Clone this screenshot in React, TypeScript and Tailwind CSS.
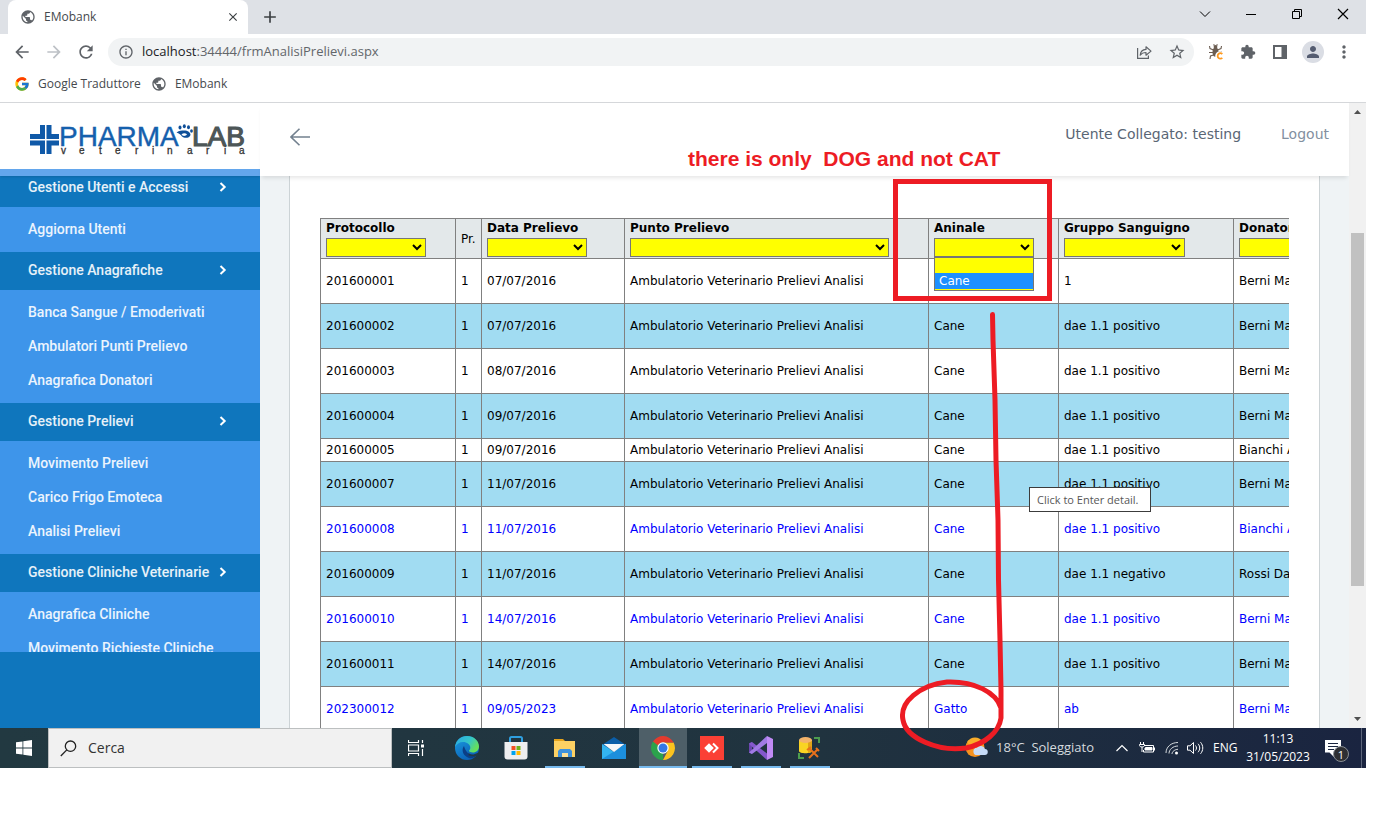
import type { ReactNode } from "react";
import {
  MdArrowBack,
  MdArrowForward,
  MdClose,
  MdAdd,
  MdExtension,
  MdInfoOutline,
  MdMoreVert,
  MdPerson,
  MdPublic,
  MdRefresh,
  MdStarBorder,
} from "react-icons/md";
import { FcGoogle } from "react-icons/fc";

const UI = "font-['Open_Sans','Noto_Sans',sans-serif]";

/* ---------- browser chrome ---------- */

function TabStrip() {
  return (
    <div className="flex h-[34px] shrink-0 items-stretch bg-[#dee1e6] pl-2">
      <div className="flex w-60 items-center rounded-t-lg bg-white pr-2 pl-3">
        <MdPublic className="size-4 text-[#5f6368]" />
        <span className="ml-2 flex-1 text-xs text-[#45494d]">EMobank</span>
        <button aria-label="Chiudi scheda" className="text-[#3c4043]">
          <MdClose className="size-3.5" />
        </button>
      </div>
      <button aria-label="Nuova scheda" className="ml-3 text-[#3c4043]">
        <MdAdd className="size-5" />
      </button>
      <div className="ml-auto flex items-center pb-1.5 text-black">
        <button aria-label="Cerca schede" className="flex w-[46px] justify-center">
          <svg width="12" height="12" viewBox="0 0 12 12" fill="none" stroke="currentColor"><path d="M1 3.5 6 8.5 11 3.5" /></svg>
        </button>
        <button aria-label="Riduci a icona" className="flex w-[46px] justify-center">
          <svg width="12" height="12" viewBox="0 0 12 12" stroke="currentColor"><path d="M1 6.5H11" /></svg>
        </button>
        <button aria-label="Ripristina" className="flex w-[46px] justify-center">
          <svg width="12" height="12" viewBox="0 0 12 12" fill="none" stroke="currentColor"><path d="M1.5 3.5h7v7h-7zM3.5 3.5v-2h7v7h-2" /></svg>
        </button>
        <button aria-label="Chiudi" className="flex w-[46px] justify-center">
          <svg width="12" height="12" viewBox="0 0 12 12" stroke="currentColor" strokeWidth="1.2"><path d="M1 1 11 11M11 1 1 11" /></svg>
        </button>
      </div>
    </div>
  );
}

function Toolbar() {
  return (
    <div className="flex h-9 shrink-0 items-center pr-3 pl-3 text-[#5f6368]">
      <button aria-label="Indietro"><MdArrowBack className="size-5" /></button>
      <button aria-label="Avanti" className="ml-3 text-[#bdc1c6]"><MdArrowForward className="size-5" /></button>
      <button aria-label="Ricarica" className="ml-3"><MdRefresh className="size-5" /></button>
      <div className="ml-3 flex h-7 flex-1 items-center rounded-full bg-[#f1f3f4] pr-2 pl-2.5">
        <MdInfoOutline className="size-4" />
        <span className="ml-2 flex-1 text-[13px] text-[#62666a]">
          <span className="text-[#202124]">localhost</span>:34444/frmAnalisiPrelievi.aspx
        </span>
        <button aria-label="Condividi">
          <svg width="16" height="16" viewBox="0 0 16 16" fill="none" stroke="currentColor" strokeWidth="1.2">
            <path d="M1.6 4v10.4h10.8v-3" />
            <path d="M4.2 11.2C4.5 7.6 6.6 5.7 10 5.4V2.8L15 7.1l-5 4.1V8.5C7.3 8.5 5.6 9.3 4.2 11.2Z" strokeLinejoin="round" />
          </svg>
        </button>
        <button aria-label="Preferiti" className="ml-4"><MdStarBorder className="size-[18px]" /></button>
      </div>
      <button aria-label="Estensione" className="ml-3.5">
        <svg width="16" height="16" viewBox="0 0 16 16" fill="none">
          <ellipse cx="7.5" cy="8.2" rx="3" ry="4.6" fill="#6b5d52" />
          <circle cx="7.5" cy="3" r="1.9" fill="#6b5d52" />
          <path d="M5.5 6 2 4.500 1.500 2M5 8.500H1M5.500 11 2.500 12 2 15M9.500 6 13 4.500 13.500 2M10 8H14M6.500 1.500 5.500.5M8.500 1.500 9.500.5" stroke="#6b5d52" strokeWidth="1.1" />
          <path d="M14.3 10a3 3 0 1 0 0 3.8" stroke="#fff" strokeWidth="3.5" />
          <path d="M14.3 10a2.7 2.7 0 1 0 0 3.8" stroke="#ff9a1f" strokeWidth="1.8" />
        </svg>
      </button>
      <button aria-label="Estensioni" className="ml-4"><MdExtension className="size-4" /></button>
      <button aria-label="Pannello laterale" className="ml-4">
        <svg width="16" height="16" viewBox="0 0 16 16"><path fill="currentColor" fillRule="evenodd" d="M1 1h14v14H1zM3 3v10h6.500V3z" /></svg>
      </button>
      <button aria-label="Profilo" className="ml-3.5 flex size-[22px] items-center justify-center rounded-full bg-[#dadde4] text-[#545c70]">
        <MdPerson className="size-[18px]" />
      </button>
      <button aria-label="Menu" className="ml-2.5"><MdMoreVert className="size-5" /></button>
    </div>
  );
}

function Bookmarks() {
  return (
    <div className="flex h-[33px] shrink-0 items-center border-b border-[#d5d7da] pb-1 pl-3.5 text-xs text-[#45494d]">
      <a href="#" className="flex items-center gap-2"><FcGoogle className="size-4" />Google Traduttore</a>
      <a href="#" className="ml-2.5 flex items-center gap-2"><MdPublic className="size-4 text-[#5f6368]" />EMobank</a>
    </div>
  );
}

/* ---------- web page ---------- */

function Logo() {
  return (
    <svg width="220" height="36" viewBox="0 0 220 36" role="img" aria-label="Pharmalab veterinaria" fontFamily="Liberation Sans, Arial, sans-serif">
      <g fill="#0f59a8">
        <path d="M10 2h5v14H0v-5h10zM16.500 2h5v9H29v5H16.500zM0 17.500h15V31h-5v-8.500H0zM16.500 17.500H29v5h-7.500V31h-5z" />
      </g>
      <text x="29" y="23" fontSize="28" fill="#1560ad" stroke="#1560ad" strokeWidth=".4">PHARMA</text>
      <text x="162" y="23" fontSize="28" fill="#4d5657" stroke="#4d5657" strokeWidth="1.2">LAB</text>
      <g fill="#0f4f98">
        <path d="M146.500 9.500c3-2 5-2 7.500-2 4 0 6.500 2 6.500 4.500-1 3.500-6.500 3.500-8.500 1.500-1-2-3-3-5.500-4z" />
        <ellipse cx="150" cy="4.500" rx="1.500" ry="2" />
        <ellipse cx="154.300" cy="3.300" rx="1.500" ry="2" />
        <ellipse cx="158.500" cy="4.300" rx="1.500" ry="2" />
        <ellipse cx="161.500" cy="8" rx="1.400" ry="1.700" />
      </g>
      <path d="M151.500 11.500c1.500-1.500 4-1.500 5.500-.2-1 2-4.500 2.200-5.500.2z" fill="#fff" />
      <text x="31 49 69 85 105 122 137 157 176 194 209" y="31" fontSize="10" fill="#333" stroke="#333" strokeWidth=".3">veterinaria</text>
    </svg>
  );
}

const menu = [
  { title: "Gestione Utenti e Accessi", items: ["Aggiorna Utenti"] },
  { title: "Gestione Anagrafiche", items: ["Banca Sangue / Emoderivati", "Ambulatori Punti Prelievo", "Anagrafica Donatori"] },
  { title: "Gestione Prelievi", items: ["Movimento Prelievi", "Carico Frigo Emoteca", "Analisi Prelievi"] },
  { title: "Gestione Cliniche Veterinarie", items: ["Anagrafica Cliniche", "Movimento Richieste Cliniche"] },
];

function Sidebar() {
  return (
    <aside className="flex w-[260px] shrink-0 flex-col bg-[#0f76bd] font-[Roboto,sans-serif] text-sm font-medium text-white/90">
      <div className="flex h-[66px] shrink-0 items-center bg-white pt-2.5 pl-[30px]"><Logo /></div>
      <nav className="relative min-h-0 flex-1 overflow-hidden before:absolute before:inset-x-0 before:top-0 before:h-[7px] before:bg-[#63a6ec] before:shadow">
        {menu.map((group) => (
          <section key={group.title}>
            <button className="flex h-[38px] w-full items-center bg-[#0f76bd] pb-0.5 pl-7 text-left">
              <span className="w-[191px]">{group.title}</span>
              <svg width="8" height="10" viewBox="0 0 8 10" fill="none" stroke="#fff" strokeWidth="2"><path d="M1.500 1 5.700 5 1.500 9" /></svg>
            </button>
            <ul className="bg-[#3e95ea] pt-[5px] pb-1.5">
              {group.items.map((item) => (
                <li key={item}><a href="#" className="flex h-[34px] items-center pl-7">{item}</a></li>
              ))}
            </ul>
          </section>
        ))}
      </nav>
      <div className="h-[76px] shrink-0" />
    </aside>
  );
}

const columns = [
  { label: "Protocollo", select: "w-[100px]" },
  { label: "Pr.", select: "" },
  { label: "Data Prelievo", select: "w-[100px]" },
  { label: "Punto Prelievo", select: "w-[259px]" },
  { label: "Aninale", select: "w-[100px]" },
  { label: "Gruppo Sanguigno", select: "w-[121px]" },
  { label: "Donatore", select: "w-[160px]" },
];

const punto = "Ambulatorio Veterinario Prelievi Analisi";
const rows = [
  ["201600001", "07/07/2016", "Cane", "1", "Berni Marco"],
  ["201600002", "07/07/2016", "Cane", "dae 1.1 positivo", "Berni Marco"],
  ["201600003", "08/07/2016", "Cane", "dae 1.1 positivo", "Berni Marco"],
  ["201600004", "09/07/2016", "Cane", "dae 1.1 positivo", "Berni Marco"],
  ["201600005", "09/07/2016", "Cane", "dae 1.1 positivo", "Bianchi Anna"],
  ["201600007", "11/07/2016", "Cane", "dae 1.1 positivo", "Berni Marco"],
  ["201600008", "11/07/2016", "Cane", "dae 1.1 positivo", "Bianchi Anna"],
  ["201600009", "11/07/2016", "Cane", "dae 1.1 negativo", "Rossi Dario"],
  ["201600010", "14/07/2016", "Cane", "dae 1.1 positivo", "Berni Marco"],
  ["201600011", "14/07/2016", "Cane", "dae 1.1 positivo", "Berni Marco"],
  ["202300012", "09/05/2023", "Gatto", "ab", "Berni Marco"],
];
const compact = new Set(["201600005"]);
const linked = new Set(["201600008", "201600010", "202300012"]);

function SampleTable() {
  return (
    <table className="w-[1114px] table-fixed border-collapse text-xs text-black">
      <colgroup>
        <col className="w-[135px]" />
        <col className="w-[26px]" />
        <col className="w-[143px]" />
        <col className="w-[304px]" />
        <col className="w-[130px]" />
        <col className="w-[175px]" />
        <col />
      </colgroup>
      <thead>
        <tr className="h-10 bg-[#e3e8ea]">
          {columns.map((c) => (
            <th key={c.label} className={`border border-[#808080] pr-0 pl-[5px] text-left ${c.select ? "align-top font-bold" : "align-middle font-normal"}`}>
              {c.select ? (
                <div className="relative">
                  <label htmlFor={c.label} className="block h-[19px] leading-[18px]">{c.label}</label>
                  <select id={c.label} className={`block h-[19px] border border-[#767676] bg-[#ffff00] font-normal ${c.select}`}>
                    <option></option>
                    <option>Cane</option>
                  </select>
                  {c.label === "Aninale" && (
                    <ul className="absolute top-[38px] left-0 w-[100px] border border-[#767676] bg-[#ffff00] pt-[15px] pb-px font-normal">
                      <li className="bg-[#1e90ff] pl-1 leading-4 text-white">Cane</li>
                    </ul>
                  )}
                </div>
              ) : (
                c.label
              )}
            </th>
          ))}
        </tr>
      </thead>
      <tbody>
        {rows.map(([id, date, animal, group, donor], i) => (
          <tr
            key={id}
            className={`${compact.has(id) ? "h-[23px]" : "h-[45px]"} ${i % 2 ? "bg-[#a1dcf2]" : "bg-white"} ${linked.has(id) ? "text-[#0000ff]" : ""}`}
          >
            {[id, "1", date, punto, animal, group, donor].map((v, k) => (
              <td key={k} className="overflow-hidden border border-[#808080] pl-[5px] whitespace-nowrap">{v}</td>
            ))}
          </tr>
        ))}
      </tbody>
    </table>
  );
}

function WebPage() {
  return (
    <div className="flex min-h-0 flex-1 overflow-hidden">
      <Sidebar />
      <div className="flex min-w-0 flex-1 flex-col bg-[#eff3f5] font-['DejaVu_Sans',Verdana,sans-serif]">
        <header className="z-10 flex h-[73px] shrink-0 items-center bg-white pr-5 pb-1.5 pl-[30px] text-sm shadow-[0_4px_4px_-2px_rgba(0,0,0,0.1)]">
          <button aria-label="Apri o chiudi menu" className="text-[#73818f]">
            <svg width="20" height="18" viewBox="0 0 20 18" fill="none" stroke="currentColor" strokeWidth="1.6"><path d="M20 9H1M9.500 .7 1 9l8.500 8.300" /></svg>
          </button>
          <span className="ml-auto pb-1.5 text-[#5a6675]">Utente Collegato: testing</span>
          <a href="#" className="ml-10 pb-1.5 text-[#8390a0]">Logout</a>
        </header>
        <main className="mr-[29px] ml-[29px] min-h-0 flex-1 overflow-hidden border-x border-[#ccd3d6] bg-white px-[30px] pt-[42px]">
          <div className="overflow-hidden"><SampleTable /></div>
        </main>
      </div>
      <div className="flex w-[17px] shrink-0 flex-col items-center bg-[#f1f1f1] py-[7px]">
        <svg width="7" height="4" viewBox="0 0 7 4"><path d="M3.500 0 7 4H0z" fill="#505050" /></svg>
        <div className="mt-[119px] h-[353px] w-[13px] bg-[#c1c1c1]" />
        <svg className="mt-auto" width="7" height="4" viewBox="0 0 7 4"><path d="M0 0h7L3.500 4z" fill="#505050" /></svg>
      </div>
    </div>
  );
}

/* ---------- taskbar ---------- */

function EdgeIcon() {
  return (
    <svg width="24" height="24" viewBox="0 0 24 24">
      <defs>
        <linearGradient id="edgeTop" x1="0" y1="0" x2="1" y2=".5">
          <stop offset="0" stopColor="#2aa7e8" /><stop offset=".6" stopColor="#35c6c8" /><stop offset="1" stopColor="#66e05a" />
        </linearGradient>
        <linearGradient id="edgeBody" x1="0" y1="0" x2=".6" y2="1">
          <stop offset="0" stopColor="#1b9de2" /><stop offset="1" stopColor="#0a5fb4" />
        </linearGradient>
      </defs>
      <circle cx="12" cy="12" r="12" fill="url(#edgeBody)" />
      <path d="M0 11C.8 4.500 5.500 0 12 0c7 0 12 5 12 10.500 0 3.800-2.800 6-6 6-2.500 0-4-.8-4-1.700 0-.7 1.300-1.200 1.300-3C15.300 8.500 12 6 8 6 4.500 6 1.500 8 0 11z" fill="url(#edgeTop)" />
      <path d="M9 10c-3 4-1 10 5 12 3 .7 6-.4 8.500-4C16 21 10.500 16.500 9 10z" fill="#0b3f86" />
      <path d="M14 14.800c-1.500 4 4 5 8.800 2l1-.2-1.300 3.200-3 .8-6-1.200z" fill="#203843" />
    </svg>
  );
}

function StoreIcon() {
  return (
    <svg width="24" height="24" viewBox="0 0 24 24">
      <path d="M6 7V2.500C6 1.500 6.500 1 7.500 1h9c1 0 1.500.5 1.500 1.500V7" fill="none" stroke="#2f9fe0" strokeWidth="2" />
      <path d="M.5 6h23v14.500c0 2-1 3-3 3h-17c-2 0-3-1-3-3z" fill="#eeeeef" />
      <path d="M7.500 10h4v4h-4z" fill="#f25022" /><path d="M12.500 10h4v4h-4z" fill="#6fb31b" />
      <path d="M7.500 15h4v4h-4z" fill="#00a4ef" /><path d="M12.500 15h4v4h-4z" fill="#ffb900" />
    </svg>
  );
}

function FolderIcon() {
  return (
    <svg width="24" height="24" viewBox="0 0 24 24">
      <path d="M1 3h9l2 2v3H1z" fill="#e6a31c" /><path d="M1 5h21v16H1z" fill="#fdd163" />
      <path d="M5 21v-6l2-2h10l2 2v6h-4v-4H9v4z" fill="#3f92dc" /><path d="M9 17h6v4H9z" fill="#fff" opacity=".35" />
    </svg>
  );
}

function MailIcon() {
  return (
    <svg width="24" height="24" viewBox="0 0 24 24">
      <path d="M0 9 12 1l12 8v4H0z" fill="#0b5ea8" />
      <path d="M0 8l12 8 12-8v15H0z" fill="#33b4f0" /><path d="M0 23 24 8v15z" fill="#1c8fdd" /><path d="M1.500 8h21L12 16z" fill="#f5f7f9" />
    </svg>
  );
}

function ChromeIcon() {
  return (
    <svg width="24" height="24" viewBox="0 0 24 24">
      <path d="M12 12v12A12 12 0 0 1 1.610 6z" fill="#2ba24c" />
      <path d="M22.600 6.400H12v5.600l4.850 2.800L12 24a12 12 0 0 0 10.600-17.600z" fill="#fcc31e" />
      <path d="M1.610 6 7.150 14.800 12 12V6.400H8L2 5.500z" fill="#2ba24c" />
      <path d="M2 5.500A12 12 0 0 1 22.600 6.400H12a5.600 5.600 0 0 0-5 3.200z" fill="#e33b2e" />
      <circle cx="12" cy="12" r="5.7" fill="#fff" /><circle cx="12" cy="12" r="4.5" fill="#3478e5" />
    </svg>
  );
}

function AnyDeskIcon() {
  return (
    <svg width="24" height="24" viewBox="0 0 24 24">
      <path d="M0 0h24v24H0z" fill="#fb4035" /><path d="M9 7.200 13.800 12 9 16.800 4.200 12z" fill="#fff" />
      <path d="M13 7.500l4.500 4.500-4.500 4.500" fill="none" stroke="#fff" strokeWidth="2" />
    </svg>
  );
}

function VisualStudioIcon() {
  return (
    <svg width="24" height="24" viewBox="0 0 24 24">
      <path d="M0 7.500 3 6v12l-3-1.500z" fill="#6a45ad" />
      <path d="M0 7.500 3 6l15 11.500V24L1 9z" fill="#8458cc" />
      <path d="M0 16.500 18 0v7L3 18z" fill="#a07ae4" />
      <path d="M18 0l6 3v18l-6 3z" fill="#c08af5" />
    </svg>
  );
}

function SqlToolsIcon() {
  return (
    <svg width="24" height="24" viewBox="0 0 24 24">
      <path d="M1 4v11c0 3 13 3 13 0V4z" fill="#f9d423" /><path d="M10 5h4v11l-4 1z" fill="#e0a416" />
      <ellipse cx="7.5" cy="4" rx="6.5" ry="3" fill="#f3b36a" />
      <path d="M16 2h5v5M1 17v5h5" fill="none" stroke="#4c9c4e" strokeWidth="2" />
      <path d="M11 12l9 9M20 13l-9 9M9 14l4-3M18 12l3 3" fill="none" stroke="#e8711c" strokeWidth="2" />
    </svg>
  );
}

const apps: { name: string; icon: ReactNode; state: "idle" | "open" | "active" }[] = [
  { name: "Edge", icon: <EdgeIcon />, state: "idle" },
  { name: "Store", icon: <StoreIcon />, state: "idle" },
  { name: "Esplora file", icon: <FolderIcon />, state: "open" },
  { name: "Posta", icon: <MailIcon />, state: "idle" },
  { name: "Chrome", icon: <ChromeIcon />, state: "active" },
  { name: "AnyDesk", icon: <AnyDeskIcon />, state: "open" },
  { name: "Visual Studio", icon: <VisualStudioIcon />, state: "open" },
  { name: "SQL Server", icon: <SqlToolsIcon />, state: "open" },
];

function Taskbar() {
  return (
    <footer className={`flex h-10 shrink-0 items-stretch bg-linear-to-r from-[#223941] via-[#20333f] via-60% to-[#1a2440] text-xs text-white ${UI}`}>
      <button aria-label="Start" className="flex w-12 items-center justify-center">
        <svg width="16" height="16" viewBox="0 0 16 16" fill="#fff"><path d="M0 2.300 6.500 1.400v6.200H0zM7.300 1.300 16 0v7.600H7.300zM0 8.400h6.500v6.200L0 13.700zM7.300 8.400H16V16l-8.700-1.300z" /></svg>
      </button>
      <label className="flex w-[344px] items-center border border-[#bcbfc0] bg-[#f1f1f1] pl-[11px] text-[#333]">
        <svg width="17" height="17" viewBox="0 0 17 17" fill="none" stroke="#222" strokeWidth="1.3"><circle cx="10.5" cy="6.2" r="5.2" /><path d="M6.800 9.900.8 16" /></svg>
        <input type="text" placeholder="Cerca" aria-label="Cerca" className="ml-[11px] min-w-0 flex-1 bg-transparent text-sm outline-none placeholder:text-[#333]" />
      </label>
      <button aria-label="Visualizzazione attività" className="mr-[3px] flex w-12 items-center justify-center">
        <svg width="16" height="16" viewBox="0 0 16 16" fill="none" stroke="#fff">
          <path d="M.5 0v2.500h10V0M.5 16v-2.500h10V16M.5 5h10v6H.5zM14.500 0v3M14.500 9v7" strokeWidth="1.2" /><path d="M13 4.500h3v3h-3z" fill="#fff" stroke="none" />
        </svg>
      </button>
      <div className="flex gap-px">
        {apps.map((a) => (
          <button
            key={a.name}
            aria-label={a.name}
            className={`relative flex w-12 items-center justify-center ${a.state === "active" ? "bg-[#4e5f68]" : ""}`}
          >
            {a.icon}
            {a.state !== "idle" && (
              <span className={`absolute bottom-0 h-0.5 bg-[#76b9ed] ${a.state === "active" ? "inset-x-0" : "inset-x-1"}`} />
            )}
          </button>
        ))}
      </div>
      <div className="ml-auto flex items-center">
        <svg width="23" height="22" viewBox="0 0 23 22">
          <circle cx="10" cy="10.5" r="9.5" fill="#f5921e" /><path d="M2 5a9.500 9.500 0 0 1 16 0L8 12z" fill="#f9ad2b" />
          <path d="M12 18a3.600 3.600 0 0 1 0-7.200 4.500 4.500 0 0 1 8 1.200 3 3 0 0 1-.5 6z" fill="#c6dbf8" />
        </svg>
        <span className="ml-2 text-[13px] whitespace-pre text-[#d5dade]">18°C  Soleggiato</span>
        <svg className="ml-[22px]" width="12" height="8" viewBox="0 0 12 8" fill="none" stroke="#fff" strokeWidth="1.2"><path d="M.5 7 6 1.500 11.500 7" /></svg>
        <svg className="ml-[11px]" width="16" height="14" viewBox="0 0 16 14" fill="none" stroke="#fff">
          <path d="M5 4.500h9.500v6.500h-10V9" /><path d="M7 6.500h6V9H6V7z" fill="#fff" /><path d="M15.500 6.500v3M1.500 1v2.500M4.500 1v2.500M.5 3.500h5v1c0 2-5 2-5 0zM3 6v5" />
        </svg>
        <svg className="ml-2.5" width="14" height="14" viewBox="0 0 14 14" fill="none" stroke="#d5dade">
          <path d="M1 12C1 6 6 1.500 13 1.500M4 12.500c0-4 4-7.500 9-7.500M7 13c0-2.500 3-4.700 6-4.700" /><circle cx="11.5" cy="12" r="1.5" fill="#fff" stroke="none" />
        </svg>
        <svg className="ml-2" width="17" height="14" viewBox="0 0 17 14" fill="none" stroke="#fff">
          <path d="M.5 4.800h2.500L6.500 1.500v11L3 9.200H.5z" /><path d="M8.500 4.500c1.300 1.500 1.300 3.500 0 5M11 2.800c2.300 2.500 2.300 5.900 0 8.400M13.500 1.200c3 3.500 3 8.100 0 11.600" />
        </svg>
        <span className="ml-[9px] w-6">ENG</span>
        <span className="ml-2 w-[66px] text-center leading-[18px]">11:13<br />31/05/2023</span>
        <button aria-label="Notifiche, 1 nuova" className="relative ml-3.5 h-6 w-7">
          <svg width="17" height="17" viewBox="0 0 17 17"><path d="M0 0h16v12.500H9V17l-4.500-4.500H0z" fill="#fff" /><path d="M3 3.500h10M3 6.500h10M3 9.500h6" stroke="#1b2640" /></svg>
          <span className="absolute top-2.5 left-2 flex size-4 items-center justify-center rounded-full border border-[#8a8f94] bg-[#2e2f33] text-[11px] leading-none">1</span>
        </button>
        <span className="ml-2 h-10 w-px bg-[#5c657a]" />
        <span className="w-1" />
      </div>
    </footer>
  );
}

/* ---------- markup drawn over the window ---------- */

function Annotations() {
  return (
    <>
      <p className="absolute top-[147px] left-[688px] z-20 font-['Liberation_Sans',Arial,sans-serif] text-[21px] leading-6 font-bold whitespace-pre text-[#ed1c24]">
        there is only  DOG and not CAT
      </p>
      <svg className="pointer-events-none absolute top-[170px] left-[880px] z-20" width="190" height="600" viewBox="880 170 190 600" fill="none" stroke="#ed1c24" strokeWidth="5" strokeLinecap="round" strokeLinejoin="round">
        <rect x="895.5" y="181.5" width="154" height="117" strokeLinejoin="miter" />
        <path d="M992.500 314.500 993 340 995 400 996 460 998 520 998.500 580 1000 640 1001 690 1001 718C999 732 985 744 966 748 938 752 906 738 903 720 899 702 920 685 947 682 974 681 996 692 1001 708" />
      </svg>
      <div role="tooltip" className={`absolute top-[487px] left-[1029px] z-20 w-[122px] border border-[#3c3c3c] bg-white px-[7px] py-[3px] text-[11px] leading-[17px] text-[#575757] ${UI}`}>
        Click to Enter detail.
      </div>
    </>
  );
}

export default function App() {
  return (
    <div className="relative flex h-screen flex-col overflow-hidden bg-white pr-[22px] pb-14">
      <div className={`flex min-h-0 flex-1 flex-col ${UI}`}>
        <TabStrip />
        <Toolbar />
        <Bookmarks />
        <WebPage />
      </div>
      <Taskbar />
      <Annotations />
    </div>
  );
}
